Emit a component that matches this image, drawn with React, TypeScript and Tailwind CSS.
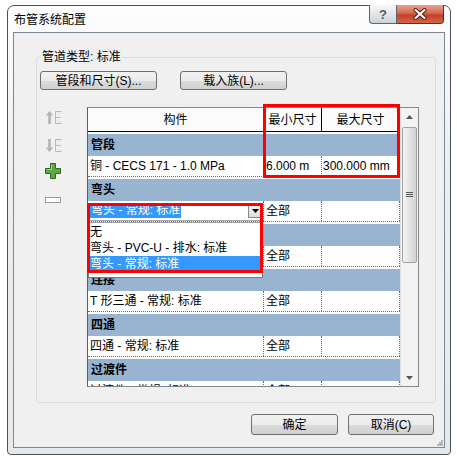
import React from 'react';

const btn =
  'border border-[#707070] rounded-[3px] bg-[linear-gradient(#f2f2f2,#ebebeb_50%,#dddddd_50%,#cfcfcf)] flex items-center justify-center leading-[14px]';

const dotted = 'border-dotted border-[#6a6a6a]';

function UpE({ down }: { down?: boolean }) {
  return (
    <svg width="18" height="15" viewBox="0 0 18 15" className={down ? 'rotate-180 -scale-x-100' : ''}>
      <path d="M4.5 1 L8.2 5.6 H5.8 V14 H3.2 V5.6 H0.8 Z" fill="#b4b4b4" />
      <path d="M10.5 1.5 H16.5 M10.5 1.5 V13.5 M10.5 7.5 H15.5 M10.5 13.5 H16.5" stroke="#b9b9b9" fill="none" />
      <path d="M12 3 H16.5 M12 12 H16.5" stroke="#e2e2e2" fill="none" />
    </svg>
  );
}

function GroupRow({ label }: { label: string }) {
  return <div className="h-[22px] bg-[#99b4d1] flex items-center pl-[3px] font-bold leading-[14px]">{label}</div>;
}

function DataRow({ name, min, max }: { name: React.ReactNode; min?: string; max?: string }) {
  return (
    <div className="h-[23px] bg-white pb-[2px]">
      <div className={`h-[21px] flex border-b ${dotted}`}>
        <div className={`w-[176px] border-r ${dotted} flex items-center pl-[2px] leading-[14px] whitespace-nowrap overflow-hidden`}>{name}</div>
        <div className={`w-[58px] border-r ${dotted} flex items-center pl-[2px] leading-[14px] whitespace-nowrap`}>{min}</div>
        <div className={`w-[78px] border-r ${dotted} flex items-center pl-[1px] leading-[14px] whitespace-nowrap`}>{max}</div>
      </div>
    </div>
  );
}

function Combo() {
  return (
    <div className="h-[19px] w-[174px] bg-white border-b border-[#a8a8a8] flex items-center">
      <span className="bg-[#3399ff] text-white leading-[15px] px-[1px]">弯头 - 常规: 标准</span>
      <div className="ml-auto mr-[1px] w-[14px] h-[14px] border border-[#8a8a8a] bg-[linear-gradient(#f4f4f4,#dcdcdc)] flex items-center justify-center">
        <svg width="7" height="4" viewBox="0 0 7 4"><path d="M0 0 H7 L3.5 4 Z" fill="#000" /></svg>
      </div>
    </div>
  );
}

export default function App() {
  return (
    <div className="w-[457px] h-[460px] bg-white pt-[5px] pl-[7px] text-[12px] text-black [font-family:'Liberation_Sans','Noto_Sans_CJK_SC',sans-serif]">
      <div className="w-[444px] h-[450px] border border-[#4a525c] rounded-t-[7px] rounded-b-[4px] bg-[linear-gradient(180deg,#fdfdfe,#eef1f4_30%,#e6e9ec)] flex flex-col">
        {/* title bar */}
        <div className="h-[26px] flex items-start justify-between">
          <div className="pl-[6px] pt-[7px] leading-[14px]">布管系统配置</div>
          <div className="flex -mt-[1px] mr-[6px]">
            <div className="w-[28px] h-[19px] border border-t-0 border-[#5b6570] rounded-bl-[4px] bg-[linear-gradient(#f6f7f8,#e3e6e9_50%,#cdd2d7)] flex items-center justify-center text-[#5a5a5a] font-bold text-[13px] leading-none">?</div>
            <div className="w-[47px] h-[19px] border border-t-0 border-l-0 border-[#6b2a1c] rounded-br-[4px] bg-[linear-gradient(#eba493,#d4684f_45%,#c24228_55%,#d56446)] flex items-center justify-center">
              <svg width="14" height="12" viewBox="0 0 14 12">
                <path d="M2.5 2 L11.5 10 M11.5 2 L2.5 10" stroke="#4b1a10" strokeWidth="4" strokeLinecap="round" />
                <path d="M2.5 2 L11.5 10 M11.5 2 L2.5 10" stroke="#fff" strokeWidth="2.2" strokeLinecap="round" />
              </svg>
            </div>
          </div>
        </div>

        {/* client area */}
        <div className="mx-[5px] h-[416px] border border-[#7d8893] bg-[#f0f0f0] flex flex-col relative">
          {/* group box */}
          <div className="ml-[22px] mt-[24px] w-[400px] h-[346px] border border-[#d5dfe5] rounded-[3px] relative flex flex-col">
            <div className="absolute left-[4px] -top-[8px] px-[1px] bg-[#f0f0f0] leading-[14px]">管道类型: 标准</div>

            <div className="flex mt-[13px] ml-[3px]">
              <div className={`${btn} w-[117px] h-[19px]`}>管段和尺寸(S)...</div>
              <div className={`${btn} w-[107px] h-[19px] ml-[23px]`}>载入族(L)...</div>
            </div>

            <div className="flex mt-[17px]">
              {/* tool icons */}
              <div className="w-[50px] pl-[8px] flex flex-col">
                <div className="mt-[3px]"><UpE /></div>
                <div className="mt-[13px]"><UpE down /></div>
                <div className="mt-[10px]">
                  <svg width="16" height="16" viewBox="0 0 16 16">
                    <path d="M5.5 0.5 H10.5 V5.5 H15.5 V10.5 H10.5 V15.5 H5.5 V10.5 H0.5 V5.5 H5.5 Z" fill="#5ea648" stroke="#2d6a20" />
                    <path d="M6.5 2 V6.5 H2" stroke="#9fd58a" fill="none" />
                  </svg>
                </div>
                <div className="mt-[18px] w-[16px] h-[6px] border border-[#9d9d9d] bg-white" />
              </div>

              {/* table */}
              <div className="relative">
                <div className="w-[332px] h-[280px] border border-[#828790] border-l-[#5e5e5e] bg-white flex">
                  <div className="w-[312px] overflow-hidden relative">
                    <div className="h-[24px] flex border-b border-black bg-[#fbfbfb]">
                      <div className="w-[176px] border-r border-black flex items-center justify-center leading-[14px]">构件</div>
                      <div className="w-[58px] border-r border-black flex items-center justify-center leading-[14px]">最小尺寸</div>
                      <div className="w-[78px] border-r border-[#d0d0d0] flex items-center justify-center leading-[14px]">最大尺寸</div>
                    </div>
                    <div className="pt-[2px]">
                      <GroupRow label="管段" />
                      <DataRow name="铜 - CECS 171 - 1.0 MPa" min="6.000 m" max="300.000 mm" />
                      <GroupRow label="弯头" />
                      <DataRow name={<Combo />} min="全部" />
                      <GroupRow label="首选连接类型" />
                      <DataRow name="T 形三通" min="全部" />
                      <GroupRow label="连接" />
                      <DataRow name="T 形三通 - 常规: 标准" min="全部" />
                      <GroupRow label="四通" />
                      <DataRow name="四通 - 常规: 标准" min="全部" />
                      <GroupRow label="过渡件" />
                      <DataRow name="过渡件 - 常规: 标准" min="全部" />
                    </div>
                  </div>

                  {/* scrollbar */}
                  <div className="w-[18px] border-l border-[#e0e0e0] bg-[#f3f3f3] flex flex-col items-center">
                    <div className="h-[17px] flex items-center justify-center">
                      <svg width="7" height="4" viewBox="0 0 7 4"><path d="M0 4 H7 L3.5 0 Z" fill="#555" /></svg>
                    </div>
                    <div className="mt-[2px] h-[136px] w-[15px] rounded-[2px] border border-[#a2a2a2] bg-[linear-gradient(90deg,#f3f3f3,#e4e4e4_50%,#d2d2d2)] flex items-center justify-center">
                      <svg width="7" height="6" viewBox="0 0 7 6"><path d="M0 0.5 H7 M0 2.5 H7 M0 4.5 H7" stroke="#555" /></svg>
                    </div>
                    <div className="flex-1" />
                    <div className="h-[17px] flex items-center justify-center">
                      <svg width="7" height="4" viewBox="0 0 7 4"><path d="M0 0 H7 L3.5 4 Z" fill="#555" /></svg>
                    </div>
                  </div>
                </div>

                {/* dropdown list */}
                <div className="absolute left-[1px] top-[115px] w-[175px] h-[56px] bg-white border border-[#7a7a7a] border-t-[#a0a0a0] pt-[1px]">
                  <div className="h-[16px] flex items-center pl-[1px] leading-[14px]">无</div>
                  <div className="h-[16px] flex items-center pl-[1px] leading-[14px]">弯头 - PVC-U - 排水: 标准</div>
                  <div className="h-[16px] flex items-center pl-[1px] leading-[14px] bg-[#3399ff] text-white">弯头 - 常规: 标准</div>
                </div>

                {/* annotations */}
                <div className="absolute left-[176px] -top-[3px] w-[137px] h-[74px] border-[3px] border-[#ff0000]" />
                <div className="absolute left-0 top-[96px] w-[176px] h-[70px] border-[3px] border-[#ff0000]" />
              </div>
            </div>
          </div>

          {/* bottom buttons */}
          <div className="flex justify-end mt-[11px] pr-[10px] gap-[10px]">
            <div className={`${btn} w-[87px] h-[21px]`}>确定</div>
            <div className={`${btn} w-[86px] h-[21px]`}>取消(C)</div>
          </div>

          <svg width="6" height="6" viewBox="0 0 6 6" className="absolute right-[1px] bottom-[1px]">
            <path d="M4 0h2v2h-2z M2 2h2v2h-2z M4 2h2v2h-2z M0 4h2v2h-2z M2 4h2v2h-2z M4 4h2v2h-2z" fill="#b8b8b8" />
          </svg>
        </div>
      </div>
    </div>
  );
}
